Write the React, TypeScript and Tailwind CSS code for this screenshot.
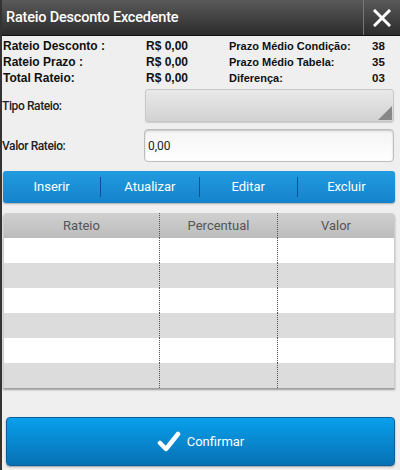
import { Fragment } from "react";

const info = [
  ["Rateio Desconto :", "R$ 0,00", "Prazo Médio Condição:", "38"],
  ["Rateio Prazo :", "R$ 0,00", "Prazo Médio Tabela:", "35"],
  ["Total Rateio:", "R$ 0,00", "Diferença:", "03"],
];

const actions = ["Inserir", "Atualizar", "Editar", "Excluir"];

export default function App() {
  return (
    <div className="w-[400px] h-[470px] bg-[#efefef] border-l-2 border-[#333] flex flex-col font-['Roboto',sans-serif] overflow-hidden">
      {/* title bar */}
      <div className="h-[36px] flex items-stretch bg-gradient-to-b from-[#5a5a5a] to-[#2c2c2c] border-b border-[#111] shrink-0">
        <div className="flex-1 flex items-center pl-[4px] text-white text-[14.5px] font-medium tracking-[-0.2px]">
          Rateio Desconto Excedente
        </div>
        <div className="w-[37px] border-l border-[#777] flex items-center justify-center">
          <svg width="18" height="18" viewBox="0 0 18 18">
            <path d="M2 2 L16 16 M16 2 L2 16" stroke="white" strokeWidth="3" strokeLinecap="square" />
          </svg>
        </div>
      </div>

      {/* info rows */}
      <div className="grid grid-cols-[143px_83px_143px_1fr] pl-[1px] pt-[2px] font-['Liberation_Sans',sans-serif] font-bold text-[12px] text-[#111] leading-[16px]">
        {info.map((r) => (
          <Fragment key={r[0]}>
            <div>{r[0]}</div>
            <div>{r[1]}</div>
            <div className="text-[11px]">{r[2]}</div>
            <div className="text-[11.5px]">{r[3]}</div>
          </Fragment>
        ))}
      </div>

      {/* form */}
      <div className="flex items-center mt-[3px] pr-[6px]">
        <div className="w-[143px] text-[12px] font-medium text-[#222] tracking-[-0.4px]">Tipo Rateio:</div>
        <div className="relative flex-1 h-[33px] rounded-[3px] border border-[#c8c8c8] bg-gradient-to-b from-[#e9e9e9] to-[#d2d2d2] shadow-[0_1px_1px_rgba(0,0,0,0.15)]">
          <svg className="absolute right-[1px] bottom-[1px]" width="14" height="14" viewBox="0 0 14 14">
            <path d="M14 0 L14 14 L0 14 Z" fill="#888" />
          </svg>
        </div>
      </div>
      <div className="flex items-center mt-[7px] pr-[6px]">
        <div className="w-[142px] text-[12px] font-medium text-[#222] tracking-[-0.4px]">Valor Rateio:</div>
        <div className="flex-1 h-[33px] rounded-[4px] border border-[#bdbdbd] bg-gradient-to-b from-[#f4f4f4] to-white flex items-center pl-[3px] text-[12px] text-[#222] shadow-[inset_0_1px_2px_rgba(0,0,0,0.2)]">
          0,00
        </div>
      </div>

      {/* action bar */}
      <div className="mt-[9px] mx-[1px] mr-[5px] h-[32px] rounded-[3px] bg-gradient-to-b from-[#229be0] to-[#1583cc] flex items-center shadow-[0_1px_2px_rgba(0,0,0,0.3)]">
        {actions.map((a, i) => (
          <div
            key={a}
            className={
              "flex-1 text-center text-white text-[13px] " +
              (i > 0 ? "border-l border-[#0a4d9a]" : "")
            }
          >
            {a}
          </div>
        ))}
      </div>

      {/* table */}
      <div className="mt-[10px] ml-[1px] mr-[5px] rounded-t-[4px] overflow-hidden shadow-[0_2px_2px_rgba(0,0,0,0.35)] border-x border-[#ccc]">
        <div className="grid grid-cols-[155px_118px_1fr] h-[25px] bg-gradient-to-b from-[#d0d0d0] to-[#bcbcbc] text-[#555] text-[13px] items-center">
          <div className="text-center">Rateio</div>
          <div className="text-center border-l border-dotted border-[#555] h-full flex items-center justify-center">Percentual</div>
          <div className="text-center border-l border-dotted border-[#555] h-full flex items-center justify-center">Valor</div>
        </div>
        {[0, 1, 2, 3, 4, 5].map((i) => (
          <div
            key={i}
            className={"grid grid-cols-[155px_118px_1fr] h-[25px] " + (i % 2 ? "bg-[#dcdcdc]" : "bg-white")}
          >
            <div />
            <div className="border-l border-dotted border-[#555]" />
            <div className="border-l border-dotted border-[#555]" />
          </div>
        ))}
      </div>

      {/* confirm */}
      <div className="mt-[29px] ml-[4px] mr-[5px] h-[49px] rounded-[4px] border border-[#0a5f9a] bg-gradient-to-b from-[#0aa0ec] to-[#0671b4] flex items-center justify-center gap-[6px] text-white text-[13px] shadow-[0_1px_2px_rgba(0,0,0,0.35)]">
        <svg width="24" height="22" viewBox="0 0 24 22">
          <path d="M3 12 L9 18 L21 3" stroke="white" strokeWidth="4.5" fill="none" strokeLinecap="round" strokeLinejoin="round" />
        </svg>
        Confirmar
      </div>
    </div>
  );
}
